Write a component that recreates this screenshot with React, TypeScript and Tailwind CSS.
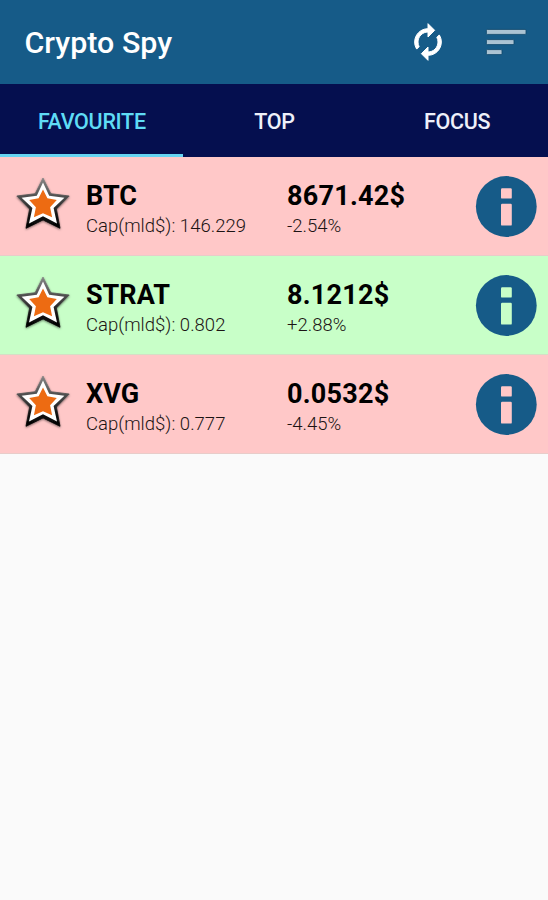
import { useState } from "react";

type Coin = {
  symbol: string;
  cap: string;
  price: string;
  change: string;
};

const TABS = ["FAVOURITE", "TOP", "FOCUS"];

const COINS: Coin[] = [
  { symbol: "BTC", cap: "146.229", price: "8671.42$", change: "-2.54%" },
  { symbol: "STRAT", cap: "0.802", price: "8.1212$", change: "+2.88%" },
  { symbol: "XVG", cap: "0.777", price: "0.0532$", change: "-4.45%" },
];

function RefreshIcon() {
  return (
    <svg width="40" height="40" viewBox="0 0 24 24" fill="#fff" stroke="#fff" strokeWidth="0.6">
      <path d="M12 6v3l4-4-4-4v3c-4.42 0-8 3.58-8 8 0 1.57.46 3.03 1.24 4.26L6.7 14.8c-.45-.83-.7-1.79-.7-2.8 0-3.31 2.69-6 6-6zm6.76 1.74L17.3 9.2c.44.84.7 1.79.7 2.8 0 3.31-2.69 6-6 6v-3l-4 4 4 4v-3c4.42 0 8-3.58 8-8 0-1.57-.46-3.03-1.24-4.26z" />
    </svg>
  );
}

function SortIcon() {
  return (
    <svg width="42" height="28" viewBox="0 0 42 28" fill="#abc3d3" stroke="#0e4568" strokeWidth="0.8">
      <rect x="1.4" y="1.4" width="39.6" height="5" rx="1" />
      <rect x="1.4" y="11.6" width="27.6" height="5" rx="1" />
      <rect x="1.4" y="21.6" width="15.6" height="5" rx="1" />
    </svg>
  );
}

function StarIcon() {
  return (
    <svg width="66" height="66" viewBox="0 0 66 66">
      <defs>
        <linearGradient id="star-edge" x1="0" y1="0" x2="0" y2="1">
          <stop offset="0" stopColor="#858585" />
          <stop offset="0.4" stopColor="#4a4a4a" />
          <stop offset="0.75" stopColor="#111" />
          <stop offset="1" stopColor="#000" />
        </linearGradient>
        <filter id="star-shadow" x="-20%" y="-20%" width="140%" height="140%">
          <feDropShadow dx="0" dy="1" stdDeviation="1.2" floodColor="#000" floodOpacity="0.5" />
        </filter>
      </defs>
      <path
        d="M33 8 40.8 23.7 59.2 26 46.4 39 50 58.3 33 49.9 16 58.3 19.6 39 6.8 26 25.2 23.7Z"
        fill="url(#star-edge)"
        stroke="url(#star-edge)"
        strokeWidth="0.8"
        strokeLinejoin="round"
        filter="url(#star-shadow)"
      />
      <path
        d="M33 12.4 39.2 25.7 54.4 27.8 43.6 38 47 53.4 33 46.2 19 53.4 22.4 38 11.6 27.8 26.8 25.7Z"
        fill="#fff"
      />
      <path
        d="M33 19.6 37.4 28.2 46.8 30 40.1 37.2 42.1 47.2 33 43.2 23.9 47.2 25.9 37.2 19.2 30 28.6 28.2Z"
        fill="#ed6b12"
      />
    </svg>
  );
}

function InfoIcon() {
  return (
    <svg width="62" height="62" viewBox="0 0 62 62">
      <mask id="info-cutout">
        <circle cx="31.3" cy="31.5" r="30.4" fill="#fff" />
        <rect x="26" y="13.2" width="10.8" height="10.4" rx="1.2" fill="#000" />
        <rect x="26" y="28.8" width="10.8" height="21.8" rx="1.2" fill="#000" />
      </mask>
      <rect width="62" height="62" fill="#165b88" mask="url(#info-cutout)" />
    </svg>
  );
}

function CoinRow({ coin }: { coin: Coin }) {
  const up = coin.change.startsWith("+");
  return (
    <div
      className={`flex h-[99px] items-start border-b ${
        up ? "border-[#d5dfc5] bg-[#c8ffc8]" : "border-[#e8ccc9] bg-[#ffc8c8]"
      }`}
    >
      <button className="ml-[10px] mt-[13px]">
        <StarIcon />
      </button>
      <div className="ml-[10px] w-[201px] pt-[23px]">
        <div className="text-[27px] leading-[32px] font-bold text-black">{coin.symbol}</div>
        <div className="text-[18.5px] leading-[29px] font-light tracking-[0.02px] text-[#1c1414]">Cap(mld$): {coin.cap}</div>
      </div>
      <div className="flex-1 pt-[23px]">
        <div className="text-[27px] leading-[32px] font-bold tracking-[0.25px] text-black">{coin.price}</div>
        <div className="text-[18.5px] leading-[29px] font-light text-[#1c1414]">{coin.change}</div>
      </div>
      <button className="mr-[11px] mt-[18px]">
        <InfoIcon />
      </button>
    </div>
  );
}

export default function App() {
  const [active, setActive] = useState(0);

  return (
    <div className="min-h-screen bg-[#fafafa] font-[Roboto,sans-serif]">
      {/* App bar */}
      <header className="flex h-[84px] items-center bg-[#165b88] pl-[24.5px] pr-[21px]">
        <h1 className="flex-1 pt-[2px] text-[30.4px] font-medium text-white">Crypto Spy</h1>
        <button className="mr-[37px]">
          <RefreshIcon />
        </button>
        <button>
          <SortIcon />
        </button>
      </header>

      {/* Tabs */}
      <nav className="flex h-[73px] bg-[#050f4f]">
        {TABS.map((tab, i) => (
          <button
            key={tab}
            onClick={() => setActive(i)}
            className={`flex-1 border-b-[3px] pt-[7px] pl-px text-[21.5px] font-medium tracking-[-0.3px] ${
              active === i ? "border-[#66d4f2] text-[#5fdcf5]" : "border-transparent text-[#eef0fa]"
            }`}
          >
            {tab}
          </button>
        ))}
      </nav>

      {/* Coin list */}
      <main>
        {COINS.map((coin) => (
          <CoinRow key={coin.symbol} coin={coin} />
        ))}
      </main>
    </div>
  );
}
